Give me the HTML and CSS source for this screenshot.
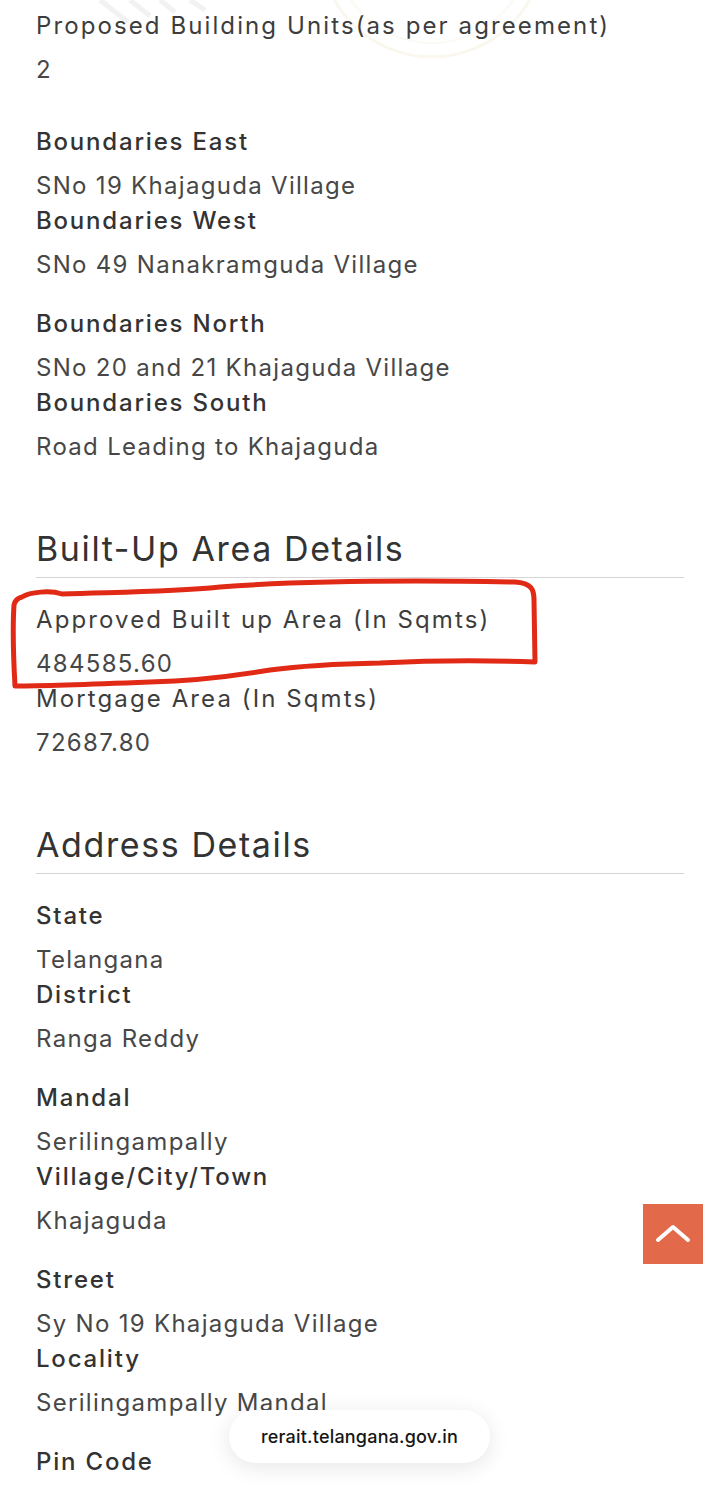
FILE: index.html
```html
<!DOCTYPE html>
<html lang="en">
<head>
<meta charset="utf-8">
<title>Project Details</title>
<link rel="stylesheet" href="styles.css">
</head>
<body>
<svg class="watermark" width="720" height="70" viewBox="0 0 720 70" aria-hidden="true">
  <circle cx="432" cy="-55" r="112" fill="none" stroke="#faf7ee" stroke-width="3"/>
  <circle cx="432" cy="-55" r="98" fill="none" stroke="#fbf9f3" stroke-width="2"/>
  <path d="M100 0 L128 22 M130 0 L150 16 M160 0 L175 12 M190 0 L205 10" stroke="#f2f2f2" stroke-width="5" fill="none"/>
</svg>

<main class="page">
  <div class="row row-first">
    <div class="field">
      <div class="label light">Proposed Building Units(as per agreement)</div>
      <div class="value">2</div>
    </div>
  </div>

  <div class="row">
    <div class="field">
      <div class="label">Boundaries East</div>
      <div class="value">SNo 19 Khajaguda Village</div>
    </div>
    <div class="field">
      <div class="label">Boundaries West</div>
      <div class="value">SNo 49 Nanakramguda Village</div>
    </div>
  </div>

  <div class="row">
    <div class="field">
      <div class="label">Boundaries North</div>
      <div class="value">SNo 20 and 21 Khajaguda Village</div>
    </div>
    <div class="field">
      <div class="label">Boundaries South</div>
      <div class="value">Road Leading to Khajaguda</div>
    </div>
  </div>

  <h2 class="section-title">Built-Up Area Details</h2>
  <div class="row">
    <div class="field">
      <div class="label light">Approved Built up Area (In Sqmts)</div>
      <div class="value">484585.60</div>
    </div>
    <div class="field">
      <div class="label light">Mortgage Area (In Sqmts)</div>
      <div class="value">72687.80</div>
    </div>
  </div>

  <h2 class="section-title">Address Details</h2>
  <div class="row">
    <div class="field">
      <div class="label">State</div>
      <div class="value">Telangana</div>
    </div>
    <div class="field">
      <div class="label">District</div>
      <div class="value">Ranga Reddy</div>
    </div>
  </div>
  <div class="row">
    <div class="field">
      <div class="label">Mandal</div>
      <div class="value">Serilingampally</div>
    </div>
    <div class="field">
      <div class="label">Village/City/Town</div>
      <div class="value">Khajaguda</div>
    </div>
  </div>
  <div class="row">
    <div class="field">
      <div class="label">Street</div>
      <div class="value">Sy No 19 Khajaguda Village</div>
    </div>
    <div class="field">
      <div class="label">Locality</div>
      <div class="value">Serilingampally Mandal</div>
    </div>
  </div>
  <div class="row">
    <div class="field">
      <div class="label">Pin Code</div>
    </div>
  </div>
</main>

<svg class="annotation" width="720" height="1486" viewBox="0 0 720 1486" aria-hidden="true">
  <path d="M22 597 C30 592 50 590 62 594 C120 592 170 592 220 587 C300 581 400 580 515 582 C532 583 534 590 534 600 L535 662 C480 660 420 661 380 663 C330 664 300 666 270 670 C240 675 200 681 150 682 C100 684 40 686 15 686 C13 650 13 620 14 605 C15 600 18 598 22 597 Z" fill="none" stroke="#e02a16" stroke-width="5" stroke-linejoin="round" stroke-linecap="round"/>
</svg>

<a class="to-top" href="#" aria-label="Back to top">
  <svg width="60" height="60" viewBox="0 0 60 60"><path d="M15 36 L30 23 L45 36" fill="none" stroke="#fff" stroke-width="4" stroke-linecap="round" stroke-linejoin="round"/></svg>
</a>

<div class="url-pill">rerait.telangana.gov.in</div>
</body>
</html>
```

FILE: styles.css
```css
html, body {
  margin: 0;
  padding: 0;
  background: #ffffff;
}

body {
  position: relative;
  width: 720px;
  height: 1486px;
  overflow: hidden;
  font-family: Inter, "Open Sans", sans-serif;
}

.watermark {
  position: absolute;
  top: 0;
  left: 0;
}

.page {
  position: relative;
  padding: 8px 36px 0 36px;
  display: flex;
  flex-direction: column;
}

.row {
  display: flex;
  flex-direction: column;
  margin-bottom: 24px;
}

.row-first {
  margin-bottom: 37px;
}

.label {
  font-size: 24px;
  line-height: 35px;
  font-weight: 500;
  color: #333333;
  letter-spacing: 1.8px;
  margin-bottom: 9px;
  white-space: nowrap;
}

.label.light {
  font-weight: 400;
  color: #3d3d3d;
  letter-spacing: 2.1px;
}

.value {
  font-size: 24px;
  line-height: 35px;
  font-weight: 400;
  color: #474747;
  letter-spacing: 1.3px;
  white-space: nowrap;
}

.section-title {
  margin: 39px 0 24px 0;
  padding-bottom: 7px;
  border-bottom: 1px solid #d6d6d6;
  font-size: 34px;
  line-height: 43px;
  font-weight: 400;
  color: #333333;
  letter-spacing: 1.6px;
}

.annotation {
  position: absolute;
  top: 0;
  left: 0;
  pointer-events: none;
}

.to-top {
  position: absolute;
  left: 643px;
  top: 1204px;
  width: 60px;
  height: 60px;
  background: #e26a4b;
  display: block;
}

.to-top svg {
  display: block;
}

.url-pill {
  position: absolute;
  left: 229px;
  top: 1410px;
  width: 261px;
  height: 53px;
  border-radius: 27px;
  background: #ffffff;
  box-shadow: 0 4px 22px rgba(0, 0, 0, 0.10);
  display: flex;
  align-items: center;
  justify-content: center;
  font-family: Inter, "Liberation Sans", sans-serif;
  font-size: 18px;
  font-weight: 500;
  letter-spacing: 0.2px;
  color: #151515;
}
```
